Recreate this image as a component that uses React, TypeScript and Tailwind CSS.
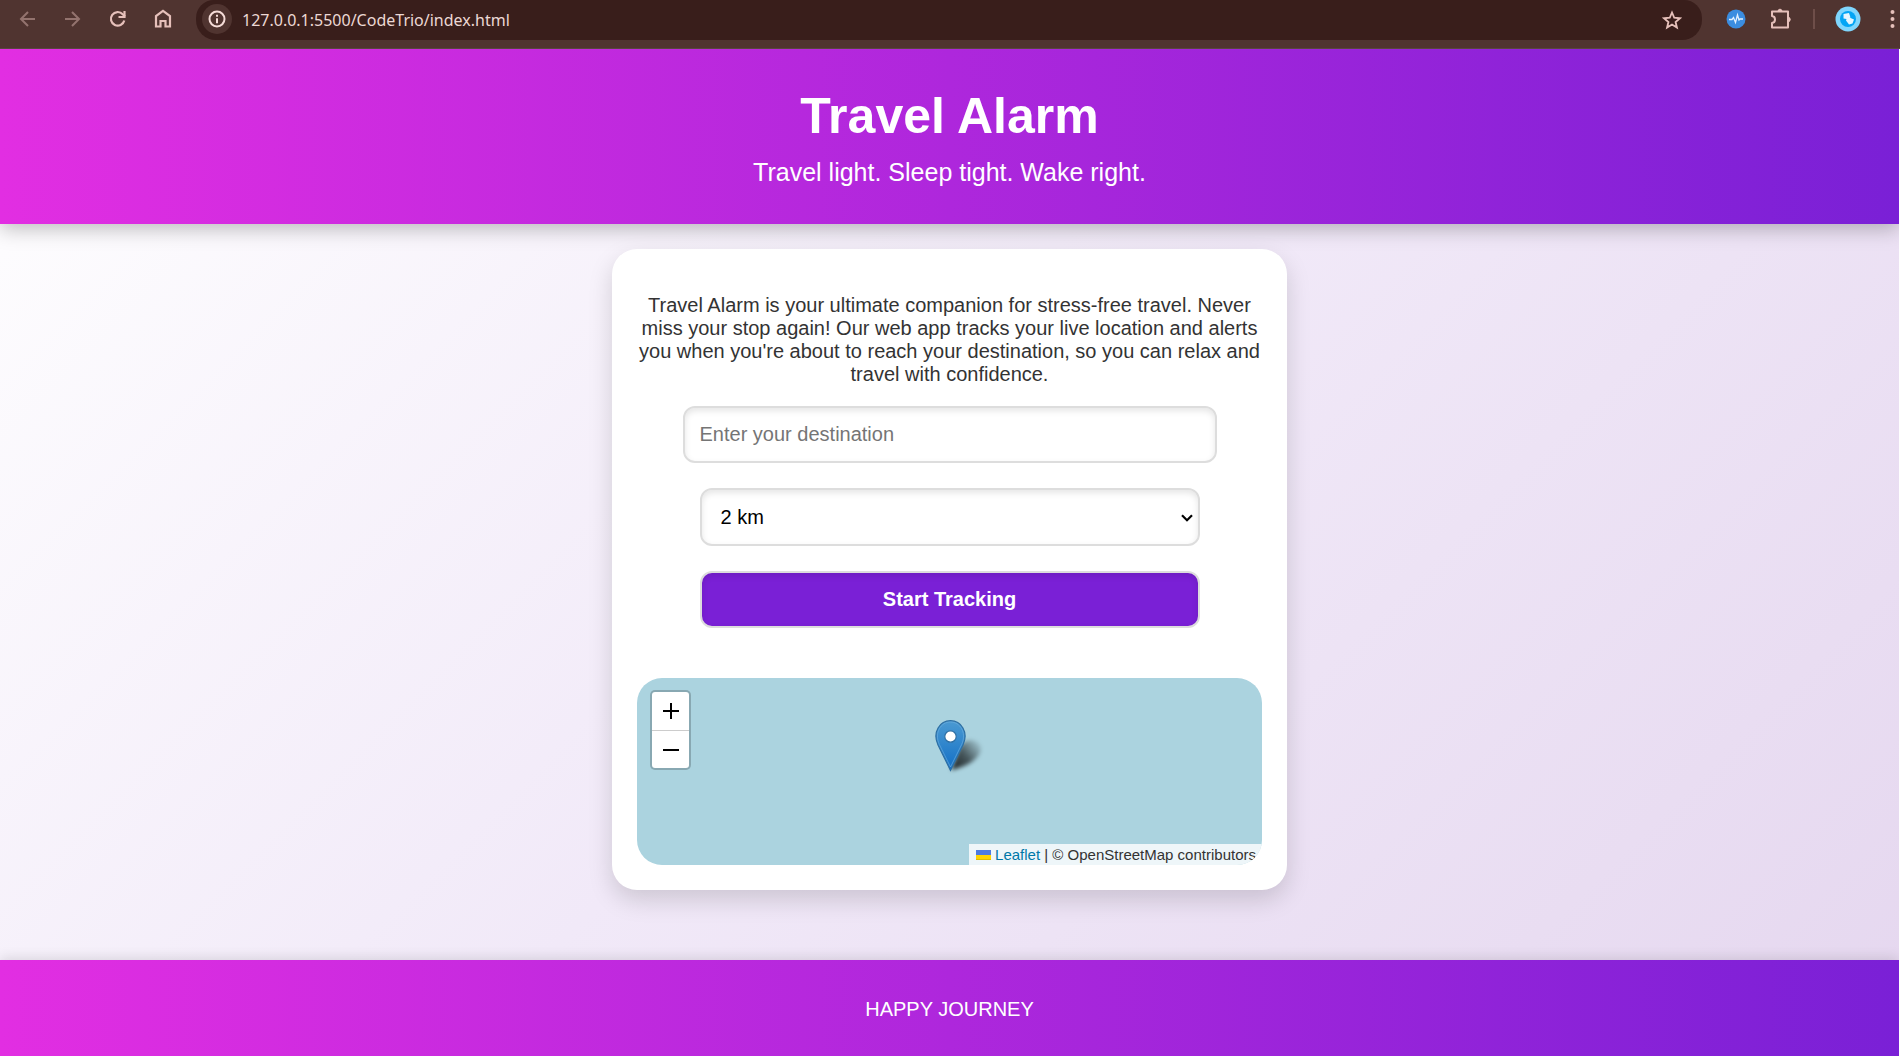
const ink = "text-[#e6c0ba]";

function Browser() {
  return (
    <div className="relative z-10 flex h-[49px] items-start border-b border-[#5a4640] bg-[#503430] pl-4">
      <div className={`flex h-[38px] items-center ${ink}`}>
        <button aria-label="Back" className="mr-[21px] size-6 opacity-45">
          <svg viewBox="0 0 24 24" className="size-6" fill="none" stroke="currentColor" strokeWidth="2">
            <path d="M19 12H5M12 5l-7 7 7 7" />
          </svg>
        </button>
        <button aria-label="Forward" className="mr-[21px] size-6 opacity-45">
          <svg viewBox="0 0 24 24" className="size-6" fill="none" stroke="currentColor" strokeWidth="2">
            <path d="M4 12h14M11 5l7 7-7 7" />
          </svg>
        </button>
        <button aria-label="Reload" className="mr-[21px] size-6">
          <svg viewBox="0 0 24 24" className="size-6" fill="none" stroke="currentColor" strokeWidth="2.200">
            <path d="M18.300 13.500a6.800 6.800 0 1 1-1.600-6.300L19 9.500" />
            <path d="M18.500 4v6h-6" />
          </svg>
        </button>
        <button aria-label="Home" className="mr-[21px] size-6">
          <svg viewBox="0 0 24 24" className="size-6" fill="none" stroke="currentColor" strokeWidth="2.200">
            <path d="M5 19.500V9L12 3.800 19 9v10.500h-4.500V14h-5v5.500z" />
          </svg>
        </button>
      </div>
      <div className="flex h-10 min-w-0 flex-1 items-center rounded-b-[20px] rounded-t-[18px] bg-[#391e1b] pl-[6px] pr-5">
        <button aria-label="Site information" className="mb-[2px] flex size-[30px] items-center justify-center rounded-full bg-[#503430] text-[#f5dcd8]">
          <svg viewBox="0 0 24 24" className="size-5" fill="none" stroke="currentColor" strokeWidth="2.400">
            <circle cx="12" cy="12" r="9" />
            <path d="M12 11v6M12 7v2.200" />
          </svg>
        </button>
        <input aria-label="Address" defaultValue="127.0.0.1:5500/CodeTrio/index.html" className="ml-[10px] min-w-0 flex-1 bg-transparent font-['Noto_Sans',sans-serif] text-base text-[#ecd8d4] outline-none" />
        <button aria-label="Bookmark" className={ink}>
          <svg viewBox="0 0 24 24" className="size-5" fill="none" stroke="currentColor" strokeWidth="2.200">
            <path d="M12 3l2.700 6.300 6.800.6-5.200 4.500 1.600 6.700L12 17.500l-5.900 3.600 1.600-6.700-5.200-4.500 6.800-.6z" />
          </svg>
        </button>
      </div>
      <div className={`flex h-[38px] items-center pl-6 ${ink}`}>
        <button aria-label="Monitor extension" className="size-5">
          <svg viewBox="0 0 20 20" className="size-5">
            <circle cx="10" cy="10" r="9.500" fill="#3b8de0" />
            <path d="M3 10.500h3l1.500-2 2 5 2-7.500 1.500 5 1-1h3" fill="none" stroke="#e3f1ff" strokeWidth="1.300" />
          </svg>
        </button>
        <button aria-label="Extensions" className="ml-[22px] size-6">
          <svg viewBox="0 0 24 24" className="size-6" fill="none" stroke="currentColor" strokeWidth="2" strokeLinejoin="round">
            <path d="M4 4.500h16v16H4V16c4-.5 4-6.500 0-7z" />
            <path d="M10 3.500a2.200 2.200 0 0 1 4 0zM21 10.500a2.200 2.200 0 0 1 0 4z" fill="currentColor" strokeWidth="1" />
          </svg>
        </button>
        <div className="ml-[21px] h-5 w-[2px] bg-[#6e4e49]" />
        <button aria-label="Profile" className="ml-5 size-[26px]">
          <svg viewBox="0 0 26 26" className="size-[26px]">
            <circle cx="13" cy="13" r="12.500" fill="#7fd6fd" />
            <circle cx="13" cy="13" r="8" fill="#03a5f5" />
            <path d="M8.500 8l5.500-1 1.500 4.500h-1l4.500 2-1.500 4-3.500 1-3-4 .5-1.500-3-.5z" fill="#e4f6ff" />
          </svg>
        </button>
        <button aria-label="Browser menu" className="ml-[23px] h-6 w-4">
          <svg viewBox="0 0 16 24" className="h-6 w-4" fill="currentColor">
            <circle cx="8.500" cy="5" r="2" />
            <circle cx="8.500" cy="12" r="2" />
            <circle cx="8.500" cy="19" r="2" />
          </svg>
        </button>
      </div>
    </div>
  );
}

function Marker() {
  return (
    <svg viewBox="0 0 51 51" className="absolute left-1/2 top-[42px] -ml-[15px] size-[51px] overflow-visible" role="img" aria-label="Current location">
      <defs>
        <linearGradient id="pin" x1="0" y1="0" x2="0" y2="1">
          <stop offset="0" stopColor="#4b9ad2" />
          <stop offset="1" stopColor="#126fc6" />
        </linearGradient>
        <linearGradient id="shade" gradientUnits="userSpaceOnUse" x1="18" y1="48" x2="46" y2="24">
          <stop offset="0" stopColor="#000" stopOpacity=".8" />
          <stop offset=".45" stopColor="#000" stopOpacity=".6" />
          <stop offset="1" stopColor="#000" stopOpacity=".05" />
        </linearGradient>
        <filter id="soft" x="-50%" y="-50%" width="200%" height="200%">
          <feGaussianBlur stdDeviation="2" />
        </filter>
      </defs>
      <path d="M16 50L25 26C31 17 46 19 46 29C45 39 31 47 16 50z" fill="url(#shade)" filter="url(#soft)" />
      <path d="M15.500 50.500L3 25C-3 12 5 .7 15.500.7S34 12 28 25z" fill="url(#pin)" stroke="#2e6fa3" strokeWidth="1.200" />
      <path d="M15.500 47L4.300 24.400C-1 12.500 6 2 15.500 2S32 12.500 26.700 24.400z" fill="none" stroke="#6fb0df" strokeOpacity=".6" />
      <circle cx="15.500" cy="16.500" r="5.700" fill="#fff" stroke="#2e6fa3" strokeWidth="1.200" />
    </svg>
  );
}

const field =
  "rounded-[12px] border-2 border-[#ddd] text-xl shadow-[inset_0_3px_6px_rgba(0,0,0,0.1)]";

const band = "bg-[linear-gradient(to_right,#e22ee2,#7a20d6)] text-center text-white";

export default function App() {
  return (
    <div className="flex min-h-screen flex-col bg-white font-['Liberation_Sans',Arial,sans-serif]">
      <Browser />
      <div className="mr-px flex flex-1 flex-col overflow-hidden bg-[linear-gradient(135deg,#ffffff,#f1e9f8_50%,#e5d7ef)]">
        <header className={`pb-[37px] pt-[38px] shadow-[0_5px_19px_rgba(0,0,0,0.25)] ${band}`}>
          <h1 className="text-[50px] font-bold leading-[58px]">Travel Alarm</h1>
          <p className="mt-[13px] text-[25px] leading-[29px]">Travel light. Sleep tight. Wake right.</p>
        </header>
        <main className="flex flex-1 flex-col items-center pb-[70px] pt-[25px]">
          <section className="flex w-full max-w-[675px] flex-col items-center rounded-[25px] bg-white p-[25px] shadow-[0_10px_25px_rgba(0,0,0,0.15)]">
            <p className="mb-5 mt-5 text-center text-xl leading-[23px] text-[#333]">
              Travel Alarm is your ultimate companion for stress-free travel. Never miss your stop again! Our web app tracks your live location and alerts you when you're about to reach your destination, so you can relax and travel with confidence.
            </p>
            <input
              aria-label="Destination"
              placeholder="Enter your destination"
              className={`h-[57px] w-[534px] max-w-full bg-white px-[15px] text-black placeholder:text-[#757575] ${field}`}
            />
            <div className="relative mt-[25px] w-[500px] max-w-full">
              <select aria-label="Alert distance" defaultValue="2" className={`block h-[58px] w-full appearance-none bg-white px-[19px] text-black ${field}`}>
                <option value="1">1 km</option>
                <option value="2">2 km</option>
                <option value="5">5 km</option>
              </select>
              <svg viewBox="0 0 12 8" className="pointer-events-none absolute right-[7px] top-[26px] h-2 w-3" fill="none" stroke="#000" strokeWidth="2.200">
                <path d="M1 1.200l5 5 5-5" />
              </svg>
            </div>
            <button className={`mt-[25px] h-[57px] w-[500px] max-w-full bg-[#7a20d6] pb-[2px] font-bold text-white ${field}`}>Start Tracking</button>
            <div className="relative mt-[50px] h-[187px] w-full overflow-hidden rounded-[25px] bg-[#abd3df]">
              <div className="absolute left-[13px] top-[12px] flex w-[41px] flex-col overflow-hidden rounded-[5px] border-2 border-black/20 bg-white bg-clip-padding">
                <button aria-label="Zoom in" className="flex h-[39px] items-center justify-center border-b border-[#ccc]">
                  <svg viewBox="0 0 16 16" className="size-4" stroke="#000" strokeWidth="2">
                    <path d="M0 8h16M8 0v16" />
                  </svg>
                </button>
                <button aria-label="Zoom out" className="flex h-[37px] items-center justify-center">
                  <svg viewBox="0 0 16 16" className="size-4" stroke="#000" strokeWidth="2">
                    <path d="M0 8h16" />
                  </svg>
                </button>
              </div>
              <Marker />
              <div className="absolute bottom-0 right-0 flex h-[21px] items-center whitespace-nowrap bg-white/80 pl-[7px] pr-[6px] text-[15px] leading-[21px] text-[#333]">
                <a href="https://leafletjs.com" className="flex items-center text-[#0078a8]">
                  <svg viewBox="0 0 15 10" className="mr-1 h-[10px] w-[15px]">
                    <path fill="#4c7be1" d="M0 0h15v5H0z" />
                    <path fill="#ffd500" d="M0 5h15v4H0z" />
                    <path fill="#e0bc00" d="M0 9h15v1H0z" />
                  </svg>
                  Leaflet
                </a>
                <span className="whitespace-pre"> | © OpenStreetMap contributors</span>
              </div>
            </div>
          </section>
        </main>
        <footer className={`pb-[36px] pt-[38px] text-xl leading-[22px] shadow-[0_-2px_12px_rgba(0,0,0,0.12)] ${band}`}>
          HAPPY JOURNEY
        </footer>
      </div>
    </div>
  );
}
